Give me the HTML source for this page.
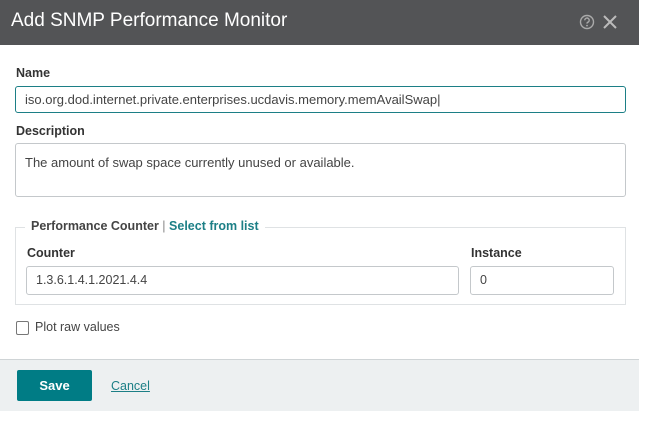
<!DOCTYPE html>
<html><head><style>
body{margin:0;width:649px;height:421px;background:#fff;font-family:"Liberation Sans",sans-serif;position:relative;overflow:hidden;color:#333}
.a{position:absolute}
.hdr{left:0;top:0;width:639px;height:45px;background:#535456}
.ttl{left:11px;top:10px;color:#fff;font-size:19px}
.lbl{font-size:12.5px;font-weight:bold;color:#333}
.inp{border:1px solid #c4c8cb;border-radius:3px;box-sizing:border-box;font-size:12.5px;color:#444;padding-left:9px;background:#fff}
.foot{left:0;top:359px;width:639px;height:51px;background:#edf0f1;border-top:1px solid #cfd4d6}
</style></head><body>
<div class="a hdr"></div>
<div class="a ttl">Add SNMP Performance Monitor</div>
<svg class="a" style="left:579px;top:14px" width="16" height="16" viewBox="0 0 16 16"><circle cx="8" cy="8" r="6.5" fill="none" stroke="#aaa" stroke-width="1.4"/><path d="M5.8 6.3a2.2 2.2 0 1 1 2.9 2c-.6.3-.7.6-.7 1.3" fill="none" stroke="#aaa" stroke-width="1.4"/><circle cx="8" cy="11.6" r=".9" fill="#aaa"/></svg>
<svg class="a" style="left:602px;top:14px" width="16" height="16" viewBox="0 0 16 16"><path d="M2 2L14 14M14 2L2 14" stroke="#bbb" stroke-width="2"/></svg>
<div class="a lbl" style="left:16px;top:66px">Name</div>
<div class="a inp" style="left:15px;top:86px;width:611px;height:27px;border-color:#1c7f86;line-height:25px;font-size:13px">iso.org.dod.internet.private.enterprises.ucdavis.memory.memAvailSwap|</div>
<div class="a lbl" style="left:16px;top:124px">Description</div>
<div class="a inp" style="left:15px;top:143px;width:611px;height:54px;padding-top:11px;font-size:13px">The amount of swap space currently unused or available.</div>
<div class="a" style="left:15px;top:227px;width:609px;height:76px;border:1px solid #dfe2e4"></div>
<div class="a" style="left:25px;top:219px;background:#fff;padding:0 6px;font-size:12.5px"><b style="color:#444">Performance Counter</b> <span style="color:#888">|</span> <b style="color:#1c7f86">Select from list</b></div>
<div class="a lbl" style="left:27px;top:246px">Counter</div>
<div class="a lbl" style="left:471px;top:246px">Instance</div>
<div class="a inp" style="left:26px;top:266px;width:433px;height:29px;line-height:27px">1.3.6.1.4.1.2021.4.4</div>
<div class="a inp" style="left:470px;top:266px;width:144px;height:29px;line-height:27px">0</div>
<div class="a" style="left:16px;top:321px;width:11px;height:12px;border:1px solid #777;border-radius:2px"></div>
<div class="a" style="left:35px;top:320px;font-size:12.5px;color:#444">Plot raw values</div>
<div class="a foot"></div>
<div class="a" style="left:17px;top:370px;width:75px;height:31px;background:#007c85;border-radius:2px;color:#fff;font-weight:bold;font-size:13px;text-align:center;line-height:31px">Save</div>
<div class="a" style="left:111px;top:379px;font-size:12.5px;color:#1c7f86;text-decoration:underline">Cancel</div>
</body></html>
